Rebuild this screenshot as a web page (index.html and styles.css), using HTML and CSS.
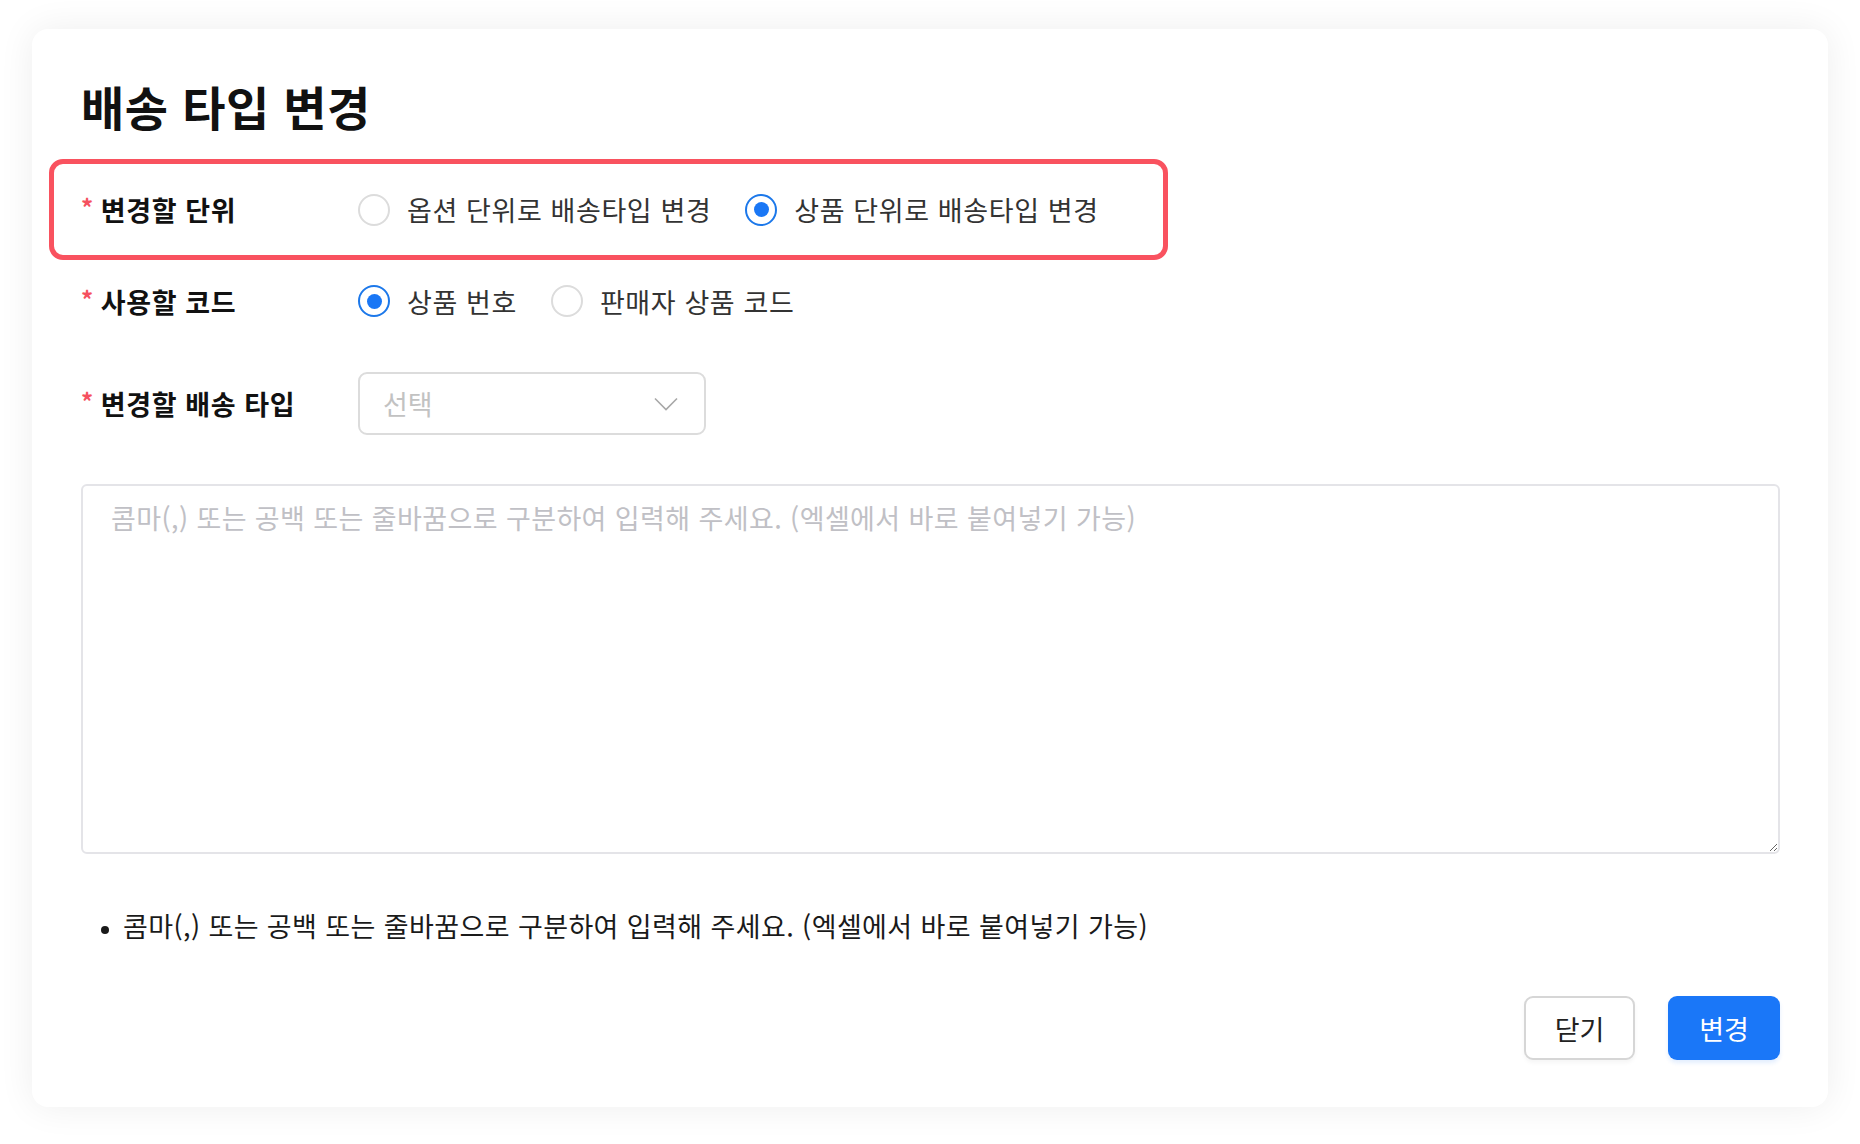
FILE: index.html
```html
<!DOCTYPE html>
<html lang="ko">
<head>
    <meta charset="UTF-8">
    <title>배송 타입 변경</title>
    <link rel="stylesheet" href="styles.css">
</head>
<body>
    <div class="modal">
        <h1 class="modal-title">배송 타입 변경</h1>

        <div class="highlight">
            <div class="form-row">
                <label class="form-label"><span class="req">*</span>변경할 단위</label>
                <div class="radio-group">
                    <label class="radio"><span class="radio-dot"></span>옵션 단위로 배송타입 변경</label>
                    <label class="radio checked"><span class="radio-dot"></span>상품 단위로 배송타입 변경</label>
                </div>
            </div>
        </div>

        <div class="form-row row-code">
            <label class="form-label"><span class="req">*</span>사용할 코드</label>
            <div class="radio-group">
                <label class="radio checked"><span class="radio-dot"></span>상품 번호</label>
                <label class="radio"><span class="radio-dot"></span>판매자 상품 코드</label>
            </div>
        </div>

        <div class="form-row row-type">
            <label class="form-label"><span class="req">*</span>변경할 배송 타입</label>
            <div class="select">
                <span class="select-text">선택</span>
                <svg class="chevron" width="24" height="14" viewBox="0 0 24 14">
                    <path d="M1 1.5 L12 12.5 L23 1.5" fill="none" stroke="#a8a8a8" stroke-width="1.6"/>
                </svg>
            </div>
        </div>

        <textarea class="codes" placeholder="콤마(,) 또는 공백 또는 줄바꿈으로 구분하여 입력해 주세요. (엑셀에서 바로 붙여넣기 가능)"></textarea>

        <ul class="notes">
            <li>콤마(,) 또는 공백 또는 줄바꿈으로 구분하여 입력해 주세요. (엑셀에서 바로 붙여넣기 가능)</li>
        </ul>

        <div class="actions">
            <button class="btn btn-close" type="button">닫기</button>
            <button class="btn btn-primary" type="button">변경</button>
        </div>
    </div>
</body>
</html>
```

FILE: styles.css
```css
* {
    box-sizing: border-box;
}
body {
    margin: 0;
    background: #ffffff;
    font-family: "Noto Sans CJK KR", "Noto Sans", sans-serif;
    color: #222;
    padding: 29px 32px 37px 32px;
}
.modal {
    background: #fff;
    border-radius: 16px;
    box-shadow: 0 0 36px rgba(0, 0, 0, 0.07);
    padding: 46px 48px 47px 49px;
    height: 1078px;
    display: flex;
    flex-direction: column;
}
.modal-title {
    margin: 0;
    font-size: 47px;
    line-height: 62px;
    font-weight: 700;
    letter-spacing: 0.5px;
    color: #111;
}
.highlight {
    margin: 22px 0 0 -32px;
    width: 1119px;
    height: 101px;
    border: 5px solid #f9525f;
    border-radius: 14px;
    padding-left: 27px;
    display: flex;
    align-items: center;
}
.form-row {
    display: flex;
    align-items: center;
    height: 62px;
}
.row-code {
    margin-top: 10px;
}
.row-type {
    margin-top: 40px;
    height: 63px;
}
.form-label {
    width: 277px;
    flex-shrink: 0;
    font-size: 27px;
    letter-spacing: 0.6px;
    font-weight: 700;
    color: #111;
    display: flex;
    align-items: center;
}
.req {
    color: #f5515f;
    font-size: 24px;
    font-weight: 700;
    margin-right: 7px;
    margin-top: -6px;
}
.radio-group {
    display: flex;
    align-items: center;
    gap: 34px;
}
.radio {
    display: flex;
    align-items: center;
    font-size: 27px;
    letter-spacing: 0.6px;
    color: #333;
}
.radio-dot {
    width: 32px;
    height: 32px;
    border-radius: 50%;
    border: 2px solid #dcdcdc;
    margin-right: 17px;
    position: relative;
}
.radio.checked .radio-dot {
    border-color: #1c78ea;
}
.radio.checked .radio-dot::after {
    content: '';
    position: absolute;
    left: 6.5px;
    top: 6.5px;
    width: 15px;
    height: 15px;
    border-radius: 50%;
    background: #1a77f5;
}
.select {
    width: 348px;
    height: 63px;
    border: 2px solid #dcdcdc;
    border-radius: 9px;
    display: flex;
    align-items: center;
    justify-content: space-between;
    padding: 0 26px 0 23px;
}
.select-text {
    font-size: 27px;
    color: #c2c2c2;
}
.codes {
    margin-top: 49px;
    width: 100%;
    height: 370px;
    border: 2px solid #e4e4e8;
    border-radius: 6px;
    padding: 12px 28px;
    font-family: "Noto Sans CJK KR", "Noto Sans", sans-serif;
    font-size: 27px;
    letter-spacing: 0.4px;
    line-height: 40px;
    color: #222;
    outline: none;
}
.codes::placeholder {
    color: #c0c0c5;
}
.notes {
    margin: 52px 0 0 0;
    padding: 0 0 0 42px;
    font-size: 27px;
    letter-spacing: 0.4px;
    line-height: 40px;
    color: #1a1a1a;
}
.notes li::marker {
    font-size: 20px;
}
.actions {
    margin-top: auto;
    display: flex;
    justify-content: flex-end;
    gap: 33px;
}
.btn {
    height: 64px;
    border-radius: 9px;
    font-family: "Noto Sans CJK KR", "Noto Sans", sans-serif;
    font-size: 27px;
    cursor: pointer;
}
.btn-close {
    width: 111px;
    background: #fff;
    border: 2px solid #d6d6d6;
    color: #222;
    box-shadow: 0 3px 4px rgba(0, 0, 0, 0.04);
}
.btn-primary {
    width: 112px;
    background: #1a77f8;
    border: none;
    color: #fff;
    box-shadow: 0 3px 4px rgba(26, 119, 248, 0.12);
}
```
